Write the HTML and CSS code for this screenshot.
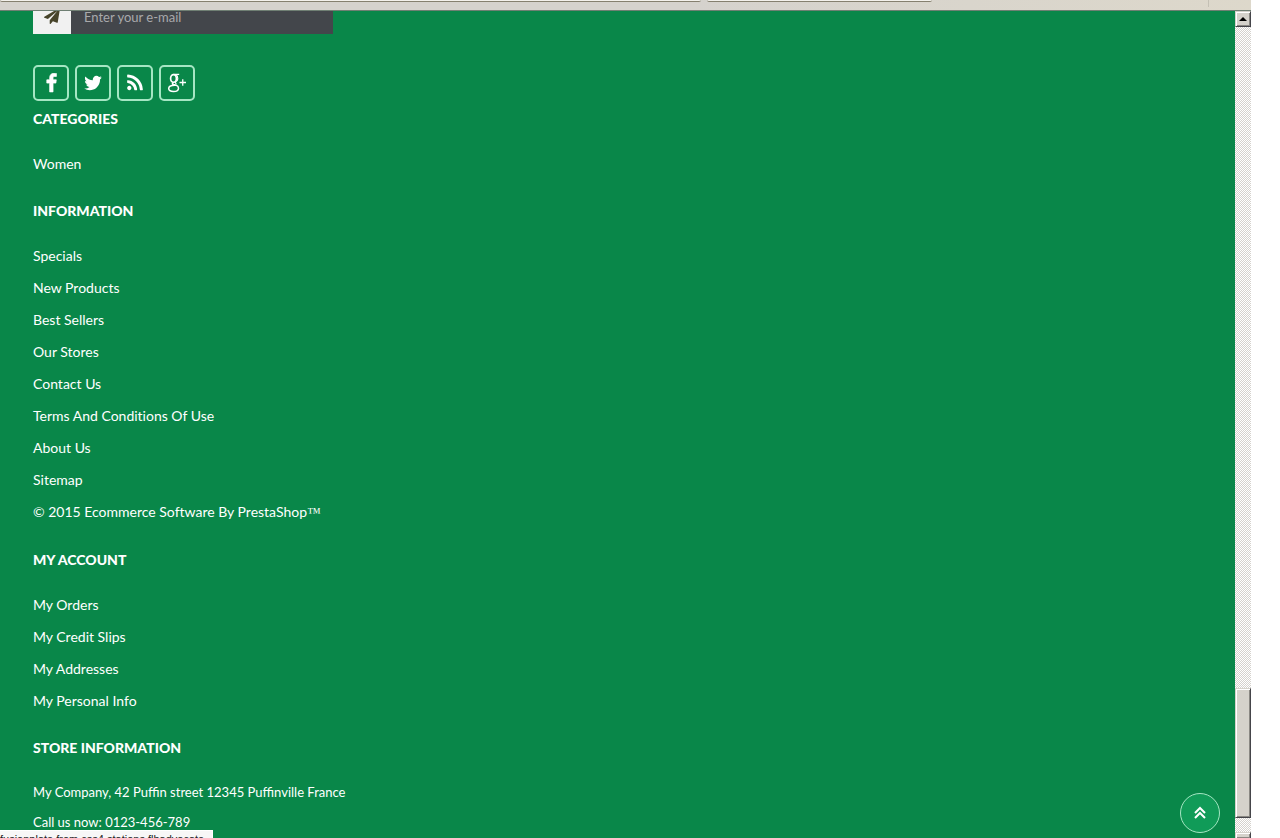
FILE: index.html
```html
<!DOCTYPE html>
<html lang="en">
<head>
    <meta charset="UTF-8">
    <meta name="viewport" content="width=device-width, initial-scale=1.0">
    <title>Store footer</title>
    <link rel="stylesheet" href="styles.css">
</head>
<body>
    <div class="browser">
        <div class="tabbar">
            <div class="tab tab-wide"></div>
            <div class="tab"></div>
            <div class="tab-end"></div>
        </div>
        <div class="viewport">
            <footer class="footer">
                <form class="newsletter">
                    <button type="button" class="newsletter-btn" aria-label="Subscribe">
                        <svg width="16" height="16" viewBox="0 0 1792 1792"><path fill="currentColor" d="M1764 11q33 24 27 64l-256 1536q-5 29-32 45-14 8-31 8-11 0-24-5l-453-185-242 295q-18 23-49 23-13 0-22-4-19-7-30.5-23.5t-11.5-36.5v-349l864-1059-1069 925-395-162q-37-14-40-55-2-40 32-59l1664-960q15-9 32-9 20 0 36 11z"/></svg>
                    </button>
                    <input type="email" class="newsletter-input" placeholder="Enter your e-mail" aria-label="E-mail">
                </form>

                <div class="social">
                    <a href="#" aria-label="Facebook">
                        <svg width="20" height="20" viewBox="0 0 1792 1792"><path fill="currentColor" stroke="currentColor" stroke-width="60" d="M1383 42v264h-157q-86 0-116 36t-30 108v159h293l-39 296h-254v789h-306v-789h-255v-296h255v-188q0-186 104-288.5t277-102.5q147 0 228 12z"/></svg>
                    </a>
                    <a href="#" aria-label="Twitter">
                        <svg width="20" height="20" viewBox="0 0 1792 1792"><path fill="currentColor" d="M1684 408q-67 98-162 167 1 14 1 42 0 130-38 259.5t-115.5 248.5-184.5 210.5-258 146-323 54.5q-271 0-496-145 35 4 78 4 225 0 401-138-105-2-188-64.5t-114-159.5q33 5 61 5 43 0 85-11-112-23-185.5-111.5t-73.5-205.5v-4q68 38 146 41-66-44-105-115t-39-154q0-88 44-163 121 149 294.5 238.5t371.5 99.5q-8-38-8-74 0-134 94.5-228.5t228.5-94.5q140 0 236 102 109-21 205-78-37 115-142 178 93-10 186-50z"/></svg>
                    </a>
                    <a href="#" aria-label="RSS">
                        <svg width="20" height="20" viewBox="0 0 1792 1792"><path fill="currentColor" d="M576 1344q0 80-56 136t-136 56-136-56-56-136 56-136 136-56 136 56 56 136zm512 123q2 28-17 48-18 21-47 21h-135q-25 0-43-16.5t-20-41.5q-22-229-184.5-391.5t-391.5-184.5q-25-2-41.5-20t-16.5-43v-135q0-29 21-47 17-17 43-17h5q160 13 306 80.5t259 181.5q114 113 181.5 259t80.5 306zm512 2q2 27-18 47-18 20-46 20h-143q-26 0-44.5-17.5t-19.5-42.5q-12-215-101-408.5t-231.5-336-336-231.5-408.5-102q-25-1-42.5-19.5t-17.5-43.5v-143q0-28 20-46 18-18 44-18h3q262 13 501.5 120t425.5 294q187 186 294 425.5t120 501.5z"/></svg>
                    </a>
                    <a href="#" aria-label="Google Plus">
                        <svg width="20" height="20" viewBox="0 0 20 20" fill="none" stroke="currentColor"><ellipse cx="6.500" cy="5.500" rx="2.900" ry="3.900" stroke-width="1.700"/><path stroke-width="1.200" d="M6.500 1.300h5.700M9.200 1.700q1.800 1.600 1.600 4-.2 1.900-1.700 2.800-1.600 1.300.3 2.500"/><path stroke-width="1.500" d="M6.500 9.400q-2.200 1.300 0 2.100l2.800.8q2.200.8 2.200 2.900 0 3.300-5 3.300-4.800 0-4.800-2.900 0-3.200 6-3.300"/><path stroke-width="1.300" d="M12.500 9.500h6.500M15.750 6.200v6.600"/></svg>
                    </a>
                </div>

                <section class="block">
                    <h4>Categories</h4>
                    <ul>
                        <li><a href="#">Women</a></li>
                    </ul>
                </section>

                <section class="block">
                    <h4>Information</h4>
                    <ul>
                        <li><a href="#">Specials</a></li>
                        <li><a href="#">New Products</a></li>
                        <li><a href="#">Best Sellers</a></li>
                        <li><a href="#">Our Stores</a></li>
                        <li><a href="#">Contact Us</a></li>
                        <li><a href="#">Terms And Conditions Of Use</a></li>
                        <li><a href="#">About Us</a></li>
                        <li><a href="#">Sitemap</a></li>
                        <li><a href="#">© 2015 Ecommerce Software By PrestaShop<span class="tm">™</span></a></li>
                    </ul>
                </section>

                <section class="block">
                    <h4>My account</h4>
                    <ul>
                        <li><a href="#">My Orders</a></li>
                        <li><a href="#">My Credit Slips</a></li>
                        <li><a href="#">My Addresses</a></li>
                        <li><a href="#">My Personal Info</a></li>
                    </ul>
                </section>

                <section class="block store">
                    <h4>Store Information</h4>
                    <ul>
                        <li>My Company, 42 Puffin street 12345 Puffinville France</li>
                        <li>Call us now: 0123-456-789</li>
                    </ul>
                </section>
            </footer>

            <div class="scrollbar">
                <div class="scroll-btn">
                    <svg width="8" height="4" viewBox="0 0 8 4"><path d="M4 0L8 4H0z"/></svg>
                </div>
                <div class="track-top"></div>
                <div class="thumb"></div>
                <div class="track-bottom"></div>
                <div class="thumb thumb-next"></div>
            </div>
        </div>

        <button type="button" class="to-top" aria-label="Back to top">
            <svg width="14" height="14" viewBox="0 0 14 14" fill="none" stroke="currentColor" stroke-width="2"><path d="M2 7l5-5 5 5M2 12l5-5 5 5"/></svg>
        </button>
        <div class="status">fusionplate.from.css4.stations.flhadvocate</div>
    </div>
</body>
</html>
```
FILE: styles.css
```css
* {
    box-sizing: border-box;
}
body {
    margin: 0;
    background: #fff;
    font-family: Lato, "Liberation Sans", sans-serif;
    font-size: 14px;
    color: #fff;
}
ul, h4 {
    margin: 0;
    padding: 0;
    list-style: none;
}
a {
    color: inherit;
    text-decoration: none;
    font-variant-ligatures: none;
}
.browser {
    position: relative;
    display: flex;
    flex-direction: column;
    height: 100vh;
    margin-right: 29px;
    overflow: hidden;
}

/* bottom edge of the browser tabs */
.tabbar {
    display: flex;
    flex: none;
    gap: 6px;
    height: 11px;
    background: linear-gradient(to right, #d5d2cd 55%, #ddd8cb);
    border-bottom: 1px solid #6f7f73;
}
.tab {
    width: 18%;
    height: 2px;
    background: #f3f1ec;
    border-bottom: 1px solid #85806f;
    border-radius: 0 0 2px 2px;
}
.tab-wide {
    width: 56%;
}
.tab-end {
    height: 7px;
    margin-left: auto;
    margin-right: 42px;
    border-left: 1px solid #c4c0b4;
}
.viewport {
    display: flex;
    flex: 1;
    min-height: 0;
}
.footer {
    flex: 1;
    padding: 0 33px;
    overflow: hidden;
    background: #098749;
}

/* newsletter */
.newsletter {
    display: flex;
    align-items: flex-end;
    width: 300px;
    height: 23px;
    overflow: hidden;
}
.newsletter-btn {
    flex: none;
    width: 38px;
    height: 34px;
    padding: 0;
    background: #f1f1f1;
    border: 0;
    color: #47442a;
}
.newsletter-input {
    flex: 1;
    min-width: 0;
    height: 34px;
    padding: 0 13px;
    background: #43464b;
    border: 0;
    font-family: inherit;
    font-size: 13px;
    color: #fff;
}
.newsletter-input::placeholder {
    color: #a9a9ab;
}

.social {
    display: flex;
    gap: 6px;
    margin-top: 31px;
}
.social a {
    display: flex;
    align-items: center;
    justify-content: center;
    width: 36px;
    height: 36px;
    border: 2px solid #a5e6c3;
    border-radius: 5px;
}

/* link blocks */
.block {
    padding-bottom: 13px;
}
.block h4 {
    margin-bottom: 11px;
    font-size: 14px;
    font-weight: 900;
    line-height: 36px;
    text-transform: uppercase;
}
.block ul {
    line-height: 32px;
}
.store ul {
    font-size: 13px;
    line-height: 30px;
}
.tm {
    font-family: "Liberation Serif", serif;
}

.scrollbar {
    display: flex;
    flex-direction: column;
    width: 16px;
    background: repeating-conic-gradient(#d5d2cd 0 25%, #fff 0 50%) 0 0 / 2px 2px;
}
.scroll-btn, .thumb {
    flex: none;
    background: #d5d2cb;
    border: 1px solid #d5d2cb;
    border-right-color: #45454a;
    border-bottom-color: #45454a;
    box-shadow: inset 1px 1px #fff, inset -1px -1px #8a8883;
}
.scroll-btn {
    display: flex;
    align-items: center;
    justify-content: center;
    height: 16px;
}
.track-top {
    flex: 1;
}
.thumb {
    height: 130px;
}
.track-bottom {
    height: 14px;
}
.thumb-next {
    height: 6px;
    border-bottom: 0;
}

.to-top {
    position: absolute;
    right: 31px;
    bottom: 5px;
    display: flex;
    align-items: center;
    justify-content: center;
    width: 40px;
    height: 40px;
    padding: 0;
    background: #109b58;
    border: 1px solid #a5e6c3;
    border-radius: 50%;
    color: #fff;
}
.status {
    position: absolute;
    left: 0;
    bottom: 0;
    width: 213px;
    height: 8px;
    overflow: hidden;
    background: #f7f7f7;
    border-top: 1px solid #fff;
    border-right: 1px solid #fff;
    font-family: "Liberation Sans", sans-serif;
    font-size: 11px;
    line-height: 16px;
    white-space: nowrap;
    color: #222;
}
```
